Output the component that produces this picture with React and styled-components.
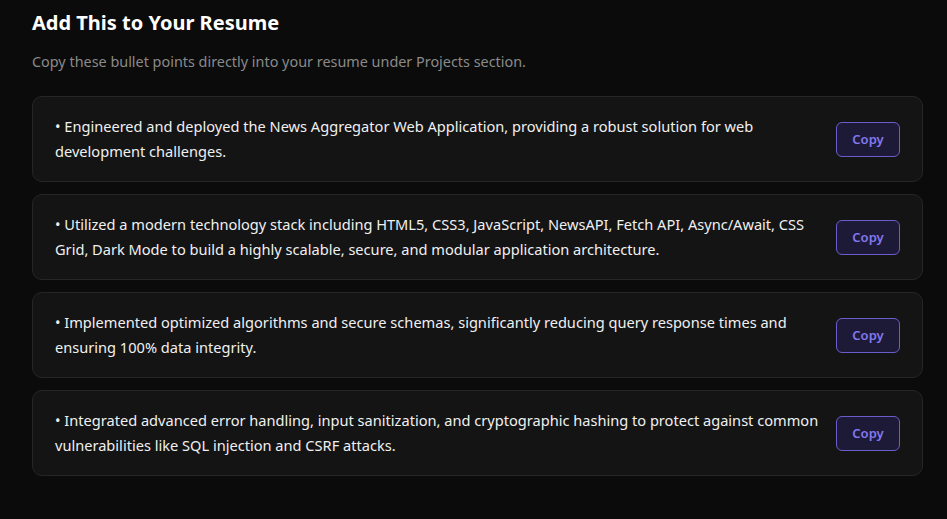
import React from "react";
import styled, { createGlobalStyle } from "styled-components";

const Global = createGlobalStyle`
  html, body { margin: 0; padding: 0; background: #0b0b0b; }
  body { font-family: "Noto Sans", "Open Sans", sans-serif; }
`;

const Page = styled.div`
  min-height: 519px;
  box-sizing: border-box;
  padding: 9px 24px 0 32px;
  background: #0b0b0b;
  color: #f2f2f2;
`;

const Title = styled.h2`
  margin: 0;
  font-size: 20px;
  line-height: 27px;
  font-weight: 700;
  color: #ffffff;
`;

const Subtitle = styled.p`
  margin: 15px 0 0;
  font-size: 14.4px;
  line-height: 22px;
  color: #8a8a8a;
`;

const List = styled.div`
  margin-top: 23px;
  display: flex;
  flex-direction: column;
  gap: 12px;
`;

const Card = styled.div`
  display: flex;
  align-items: center;
  gap: 4px;
  padding: 17px 22px 17px 22px;
  background: #141414;
  border: 1px solid #262626;
  border-radius: 10px;
`;

const Text = styled.p`
  flex: 1;
  margin: 0;
  font-size: 14.6px;
  line-height: 25px;
  color: #f0f0f0;
`;

const CopyButton = styled.button`
  flex: none;
  width: 64px;
  height: 35px;
  border: 1.5px solid #6a5ecb;
  border-radius: 6px;
  background: #1d1a38;
  color: #8279ee;
  font-family: "Noto Sans", "Open Sans", sans-serif;
  font-size: 13px;
  font-weight: 600;
  cursor: pointer;
`;

const bullets = [
  "Engineered and deployed the News Aggregator Web Application, providing a robust solution for web development challenges.",
  "Utilized a modern technology stack including HTML5, CSS3, JavaScript, NewsAPI, Fetch API, Async/Await, CSS Grid, Dark Mode to build a highly scalable, secure, and modular application architecture.",
  "Implemented optimized algorithms and secure schemas, significantly reducing query response times and ensuring 100% data integrity.",
  "Integrated advanced error handling, input sanitization, and cryptographic hashing to protect against common vulnerabilities like SQL injection and CSRF attacks.",
];

export default function App() {
  return (
    <>
      <Global />
      <Page>
        <Title>Add This to Your Resume</Title>
        <Subtitle>Copy these bullet points directly into your resume under Projects section.</Subtitle>
        <List>
          {bullets.map((b, i) => (
            <Card key={i}>
              <Text>{`• ${b}`}</Text>
              <CopyButton>Copy</CopyButton>
            </Card>
          ))}
        </List>
      </Page>
    </>
  );
}
